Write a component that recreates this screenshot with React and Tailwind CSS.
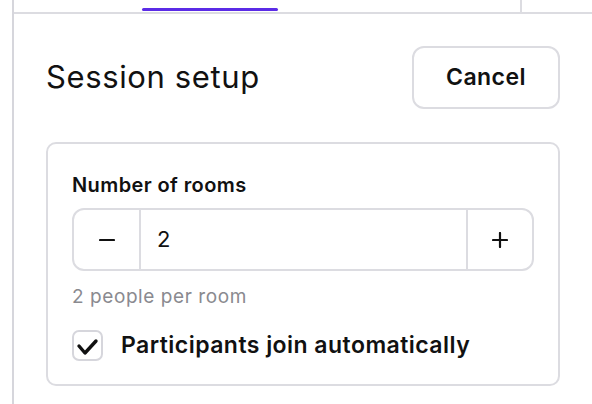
import React, { useState } from 'react';

const font = { fontFamily: 'Inter, "Noto Sans", sans-serif' };

const Stepper = ({ value, onChange }) => (
  <div className="flex h-[63px] rounded-[12px] border-2 border-[#dcdce1] overflow-hidden">
    <button
      className="w-[67px] flex items-center justify-center border-r-2 border-[#dcdce1]"
      onClick={() => onChange(Math.max(1, value - 1))}
    >
      <svg width="16" height="16" viewBox="0 0 16 16">
        <path d="M1 8h14" stroke="#111" strokeWidth="2.2" strokeLinecap="round" />
      </svg>
    </button>
    <div className="flex-1 flex items-center pl-[16px] text-[22px] text-[#111]">{value}</div>
    <button
      className="w-[66px] flex items-center justify-center border-l-2 border-[#dcdce1]"
      onClick={() => onChange(value + 1)}
    >
      <svg width="16" height="16" viewBox="0 0 16 16">
        <path d="M1 8h14M8 1v14" stroke="#111" strokeWidth="2.2" strokeLinecap="round" />
      </svg>
    </button>
  </div>
);

export default function App() {
  const [rooms, setRooms] = useState(2);
  const [autoJoin, setAutoJoin] = useState(true);

  return (
    <div className="w-[592px] h-[404px] bg-white overflow-hidden" style={font}>
      <div className="ml-[12px] h-full border-l-2 border-[#d6d6dc] flex flex-col">
        {/* tab strip */}
        <div className="flex h-[14px] border-b-2 border-[#dcdce1]">
          <div className="w-[506px] pl-[128px] flex items-end pb-[1px]">
            <div className="w-[136px] h-[3px] rounded-full bg-[#5b2be6]" />
          </div>
          <div className="flex-1 border-l-2 border-[#dcdce1]" />
        </div>

        <div className="pl-[32px] pr-[32px] pt-[32px]">
          <div className="flex items-center justify-between">
            <h1 className="text-[31px] text-[#111] tracking-[0.02em]">Session setup</h1>
            <button className="w-[148px] h-[63px] rounded-[12px] border-2 border-[#dcdce1] text-[23px] font-semibold text-[#111] tracking-[0.02em]">
              Cancel
            </button>
          </div>

          <div className="mt-[33px] rounded-[10px] border-2 border-[#dcdce1] px-[24px] pt-[27px] pb-[23px]">
            <p className="text-[20px] leading-[28px] font-semibold text-[#111] tracking-[0.02em]">Number of rooms</p>
            <div className="mt-[9px]">
              <Stepper value={rooms} onChange={setRooms} />
            </div>
            <p className="mt-[14px] text-[19px] leading-[24px] text-[#8a8a8f] tracking-[0.03em]">
              {rooms} people per room
            </p>
            <label className="mt-[20px] flex items-center gap-[18px] cursor-pointer">
              <span
                className="w-[31px] h-[31px] rounded-[7px] border-2 border-[#d6d6dc] flex items-center justify-center"
                onClick={() => setAutoJoin(!autoJoin)}
              >
                {autoJoin && (
                  <svg width="27" height="27" viewBox="0 0 27 27">
                    <path d="M5 14l6 7L22 9" fill="none" stroke="#111" strokeWidth="3.4" strokeLinecap="round" strokeLinejoin="round" />
                  </svg>
                )}
              </span>
              <span className="text-[23px] leading-[32px] font-semibold text-[#111] tracking-[0.02em]">
                Participants join automatically
              </span>
            </label>
          </div>
        </div>
      </div>
    </div>
  );
}
